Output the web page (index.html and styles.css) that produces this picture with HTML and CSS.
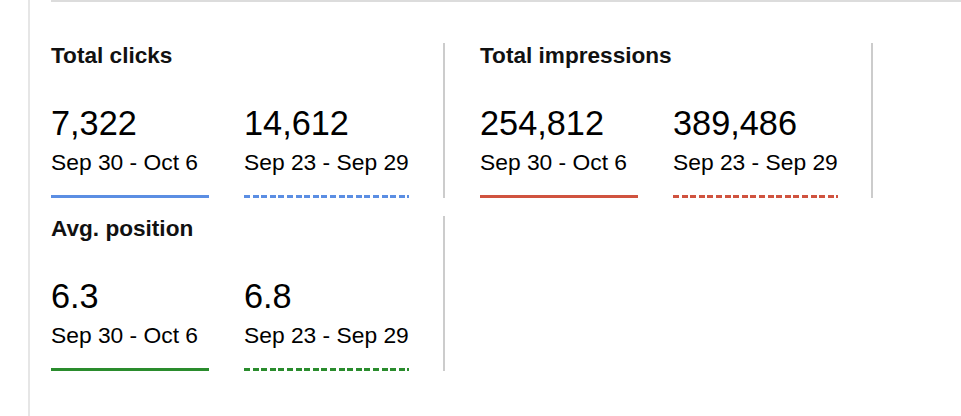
FILE: index.html
```html
<!DOCTYPE html>
<html lang="en">
<head>
<meta charset="utf-8">
<title>Performance summary</title>
<link rel="stylesheet" href="styles.css">
</head>
<body>
<div class="panel">
  <div class="rule"></div>
  <div class="grid">
    <section class="card card-first">
      <h2 class="title">Total clicks</h2>
      <div class="items">
        <div class="item item-current">
          <div class="value">7,322</div>
          <div class="range">Sep 30 - Oct 6</div>
          <div class="bar bar-blue"></div>
        </div>
        <div class="item">
          <div class="value">14,612</div>
          <div class="range">Sep 23 - Sep 29</div>
          <div class="bar bar-blue-dash"></div>
        </div>
      </div>
    </section>
    <section class="card card-second">
      <h2 class="title">Total impressions</h2>
      <div class="items">
        <div class="item item-current">
          <div class="value">254,812</div>
          <div class="range">Sep 30 - Oct 6</div>
          <div class="bar bar-red"></div>
        </div>
        <div class="item">
          <div class="value">389,486</div>
          <div class="range">Sep 23 - Sep 29</div>
          <div class="bar bar-red-dash"></div>
        </div>
      </div>
    </section>
    <section class="card card-first">
      <h2 class="title">Avg. position</h2>
      <div class="items">
        <div class="item item-current">
          <div class="value">6.3</div>
          <div class="range">Sep 30 - Oct 6</div>
          <div class="bar bar-green"></div>
        </div>
        <div class="item">
          <div class="value">6.8</div>
          <div class="range">Sep 23 - Sep 29</div>
          <div class="bar bar-green-dash"></div>
        </div>
      </div>
    </section>
  </div>
</div>
</body>
</html>
```

FILE: styles.css
```css
* { box-sizing: border-box; }

html, body {
  margin: 0;
  padding: 0;
  background: #fff;
}

body {
  font-family: "Liberation Sans", Arial, sans-serif;
  color: #000;
  overflow: hidden;
}

.panel {
  margin-left: 28px;
  border-left: 2px solid #e6e6e6;
  height: 416px;
  padding-left: 21px;
}

.rule {
  height: 2px;
  background: #dcdcdc;
}

.grid {
  display: grid;
  grid-template-columns: 394px 428px;
  row-gap: 18px;
  margin-top: 41px;
}

.card {
  height: 155px;
  border-right: 2px solid #cccccc;
  display: flex;
  flex-direction: column;
}

.card-second {
  padding-left: 35px;
}

.title {
  margin: 0;
  font-size: 22.6px;
  line-height: 25px;
  font-weight: bold;
  color: #111;
}

.items {
  display: flex;
  gap: 35px;
  margin-top: 35px;
}

.item {
  display: flex;
  flex-direction: column;
  width: max-content;
}

.item-current {
  min-width: 158px;
}

.value {
  font-size: 34.3px;
  line-height: 40px;
}

.range {
  margin-top: 6px;
  font-size: 22.8px;
  line-height: 26px;
  white-space: nowrap;
}

.bar {
  margin-top: 20px;
  height: 3px;
}

.bar-blue { background: #5b8ee3; }
.bar-red { background: #d0533f; }
.bar-green { background: #2a8c2d; }

.bar-blue-dash {
  background: repeating-linear-gradient(90deg, #5b8ee3 0 6px, transparent 6px 8.6px);
}
.bar-red-dash {
  background: repeating-linear-gradient(90deg, #d0533f 0 6px, transparent 6px 8.6px);
}
.bar-green-dash {
  background: repeating-linear-gradient(90deg, #2a8c2d 0 6px, transparent 6px 8.6px);
}
```
